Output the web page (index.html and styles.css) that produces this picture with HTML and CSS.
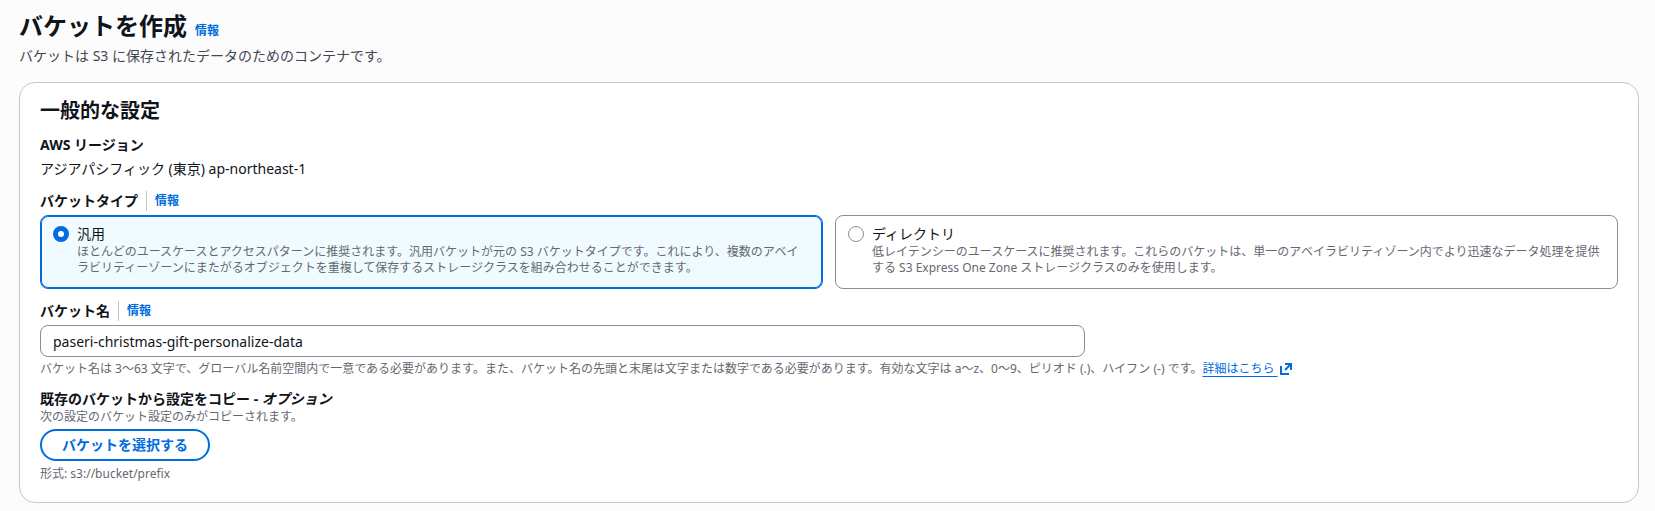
FILE: index.html
```html
<!DOCTYPE html>
<html lang="ja">
<head>
    <meta charset="UTF-8">
    <meta name="viewport" content="width=device-width, initial-scale=1.0">
    <title>バケットを作成</title>
    <link rel="stylesheet" href="styles.css">
</head>
<body>
    <main class="page">
        <header class="page-header">
            <div class="title-row">
                <h1>バケットを作成</h1>
                <a class="info-link" href="#">情報</a>
            </div>
            <p class="page-description">バケットは S3 に保存されたデータのためのコンテナです。</p>
        </header>

        <form class="card">
            <h2>一般的な設定</h2>

            <div class="field">
                <div class="label">AWS リージョン</div>
                <div class="value">アジアパシフィック (東京) ap-northeast-1</div>
            </div>

            <div class="field" role="radiogroup" aria-labelledby="type-label">
                <div class="label-row">
                    <span class="label" id="type-label">バケットタイプ</span>
                    <a class="info-link divided" href="#">情報</a>
                </div>
                <div class="tiles">
                    <label class="tile selected">
                        <input class="radio" type="radio" name="bucket-type" checked>
                        <span class="tile-text">
                            <span class="tile-title">汎用</span>
                            <span class="hint">ほとんどのユースケースとアクセスパターンに推奨されます。汎用バケットが元の S3 バケットタイプです。これにより、複数のアベイラビリティーゾーンにまたがるオブジェクトを重複して保存するストレージクラスを組み合わせることができます。</span>
                        </span>
                    </label>
                    <label class="tile">
                        <input class="radio" type="radio" name="bucket-type">
                        <span class="tile-text">
                            <span class="tile-title">ディレクトリ</span>
                            <span class="hint">低レイテンシーのユースケースに推奨されます。これらのバケットは、単一のアベイラビリティゾーン内でより迅速なデータ処理を提供する S3 Express One Zone ストレージクラスのみを使用します。</span>
                        </span>
                    </label>
                </div>
            </div>

            <div class="field">
                <div class="label-row">
                    <label class="label" for="bucket-name">バケット名</label>
                    <a class="info-link divided" href="#">情報</a>
                </div>
                <div class="input-grid">
                    <input class="text-input" type="text" id="bucket-name" value="paseri-christmas-gift-personalize-data">
                </div>
                <p class="hint">バケット名は 3～63 文字で、グローバル名前空間内で一意である必要があります。また、バケット名の先頭と末尾は文字または数字である必要があります。有効な文字は a～z、0～9、ピリオド (.)、ハイフン (-) です。<a class="more-link" href="#">詳細はこちら&nbsp;<svg class="external-icon" viewBox="0 0 16 16" aria-hidden="true"><path d="M7 3h6v6M7 9l6-6M3 5v8h8"/></svg></a></p>
            </div>

            <div class="field">
                <div class="label-group">
                    <label class="label" for="choose-bucket">既存のバケットから設定をコピー - <em>オプション</em></label>
                    <p class="hint">次の設定のバケット設定のみがコピーされます。</p>
                </div>
                <button class="button" type="button" id="choose-bucket">バケットを選択する</button>
                <p class="hint">形式: s3://bucket/prefix</p>
            </div>
        </form>
    </main>
</body>
</html>
```
FILE: styles.css
```css
* {
    box-sizing: border-box;
}

body {
    margin: 0;
    background-color: #fcfcfd;
    color: #0f141a;
    font-family: "Noto Sans", "Noto Sans CJK JP", sans-serif;
    font-size: 14px;
    line-height: 20px;
}

h1, h2, p {
    margin: 0;
}

.page {
    padding: 11px 16px 8px 19px;
}

.page-header {
    margin-bottom: 16px;
}

.title-row {
    display: flex;
    align-items: baseline;
    gap: 8px;
    margin-bottom: 5px;
}

h1 {
    font-size: 24px;
    line-height: 30px;
}

.info-link {
    color: #006ce0;
    font-size: 12px;
    font-weight: 700;
    text-decoration: none;
}

.page-description {
    color: #424650;
}

.card {
    display: flex;
    flex-direction: column;
    gap: 12px;
    padding: 16px 20px 20px;
    background-color: #fff;
    border: 1px solid #c6c6cd;
    border-radius: 16px;
}

h2 {
    font-size: 20px;
    line-height: 24px;
}

.field {
    display: flex;
    flex-direction: column;
    gap: 4px;
}

.label {
    font-weight: 700;
}

.label-row {
    display: flex;
}

.divided {
    margin-left: 8px;
    padding-left: 8px;
    border-left: 1px solid #c6c6cd;
}

.tiles {
    display: grid;
    grid-template-columns: 1fr 1fr;
    gap: 12px;
}

.tile {
    display: flex;
    gap: 8px;
    padding: 8px 12px 12px;
    border: 1px solid #8c8c94;
    border-radius: 8px;
}

/* second pixel of the border is drawn inside so the text doesn't move */
.tile.selected {
    background-color: #f0fbff;
    border-color: #006ce0;
    box-shadow: inset 0 0 0 1px #006ce0;
}

.radio {
    appearance: none;
    flex: none;
    width: 16px;
    height: 16px;
    margin: 2px 0 0;
    background-color: #fff;
    border: 1px solid #8c8c94;
    border-radius: 50%;
}

.radio:checked {
    border: 5px solid #006ce0;
}

.tile-text {
    display: flex;
    flex-direction: column;
}

.hint {
    color: #656871;
    font-size: 12px;
    line-height: 16px;
}

.input-grid {
    display: grid;
    grid-template-columns: 2fr 1fr;
    gap: 10px;
}

.text-input {
    height: 32px;
    padding: 0 12px;
    background-color: #fff;
    border: 1px solid #8c8c94;
    border-radius: 8px;
    color: inherit;
    font: inherit;
}

.more-link {
    color: #006ce0;
    text-underline-offset: 3px;
}

.external-icon {
    width: 16px;
    height: 16px;
    vertical-align: -4px;
    fill: none;
    stroke: currentColor;
    stroke-width: 2;
}

.button {
    align-self: flex-start;
    height: 32px;
    margin-bottom: 1px;
    padding: 0 20px;
    background-color: #fff;
    border: 2px solid #006ce0;
    border-radius: 16px;
    color: #006ce0;
    font: inherit;
    font-weight: 700;
    cursor: pointer;
}
```
